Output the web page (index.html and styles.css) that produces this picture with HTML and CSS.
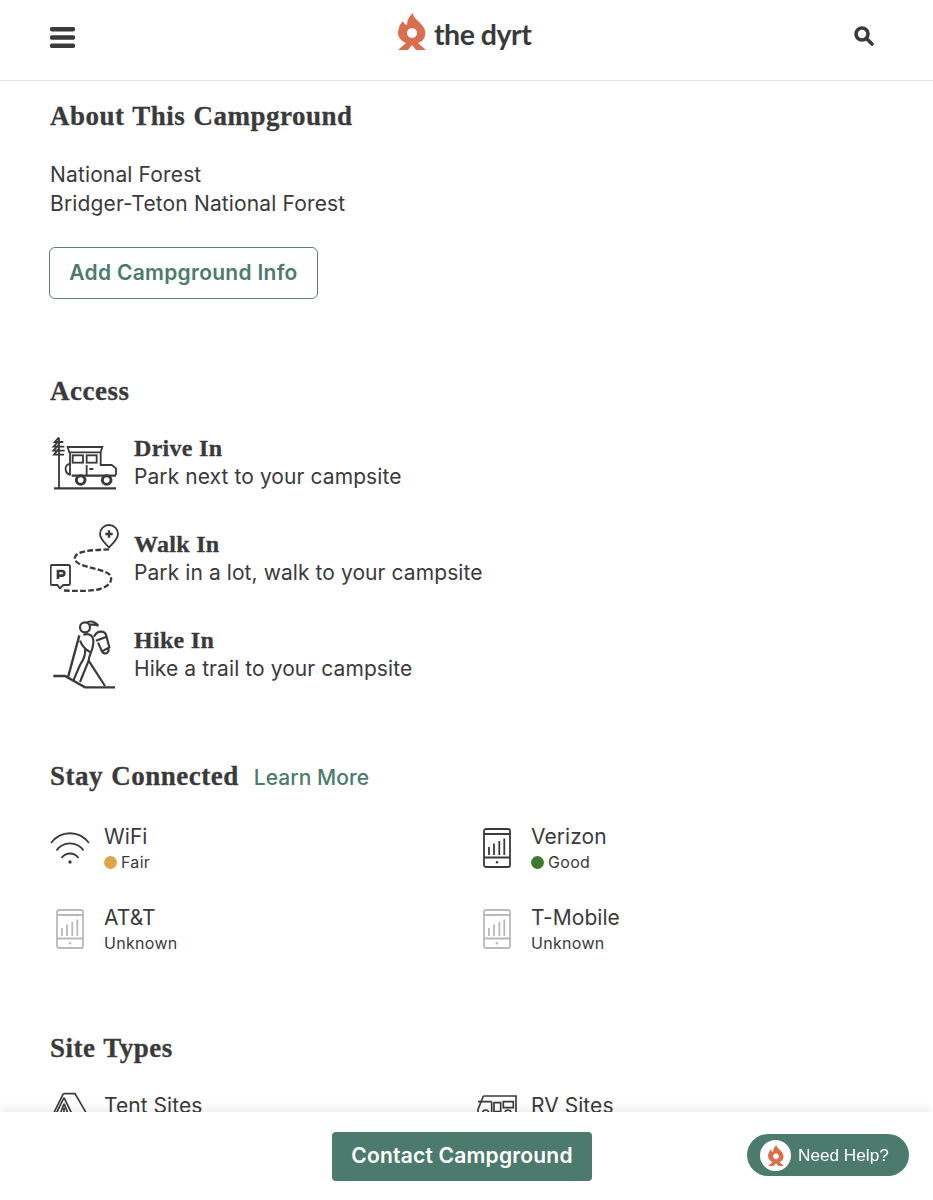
FILE: index.html
```html
<!DOCTYPE html>
<html lang="en">
<head>
<meta charset="utf-8">
<title>About This Campground - The Dyrt</title>
<link rel="stylesheet" href="styles.css">
</head>
<body>
<header class="topbar">
  <svg class="burger" viewBox="0 0 25 21"><path d="M2 2.200h21M2 10.500h21M2 18.800h21"/></svg>
  <div class="logo">
    <svg class="flame" viewBox="0 0 28 37"><path fill-rule="evenodd" d="M15 0C15 5 19 6 23 11C27 15 28 19 27 23C26 27 23 29 20 30L28 37H18L14 32L10 37H0L8 30C3 28 0 24 0 20C0 15 2 11 5 8C6 11 8 12 9 12C9 7 11 3 15 0ZM14 15a5 5 0 1 0 .01 0Z"/></svg>
    <span class="logo-text">the dyrt</span>
  </div>
  <svg class="search" viewBox="0 0 20 20"><circle cx="8" cy="8" r="6"/><path d="M12.500 12.500L18 18"/></svg>
</header>
<main class="page">
  <h2 class="h-about">About This Campground</h2>
  <p class="about-text">National Forest<br>Bridger-Teton National Forest</p>
  <a class="outline-btn">Add Campground Info</a>

  <h2 class="h-section">Access</h2>
  <div class="access-list">
    <div class="access-row">
      <svg class="access-icon" viewBox="60 21 210 210">
        <path class="thick" d="M72 205H258"/>
        <path d="M87 205V55M87 52L74 66H100M87 62L71 80H103M87 74L70 92H104M87 86L72 104H102"/>
        <path d="M113 81H217L212 97H118ZM120 97V165M212 97V135H245L258 145V165M120 132C102 132 102 160 122 165M170 135V165M178 147H190"/>
        <path class="thick" d="M125 167H258"/>
        <rect x="128" y="106" width="31" height="22"/><rect x="170" y="106" width="30" height="22"/>
        <circle class="wheel" cx="152" cy="180" r="13"/><circle class="wheel" cx="230" cy="180" r="13"/>
      </svg>
      <div><h3 class="access-title">Drive In</h3><p class="access-sub">Park next to your campsite</p></div>
    </div>
    <div class="access-row">
      <svg class="access-icon" viewBox="60 24 210 210">
        <path d="M237 97C225 85 210 72 210 57A27 27 0 0 1 264 57C264 72 249 85 237 97Z"/>
        <path class="thick" d="M237 46V68M226 57H248"/>
        <path class="dash" d="M237 103C205 105 165 105 145 115C128 125 132 142 155 150C185 160 225 165 240 180C250 195 240 212 210 222C180 230 130 228 95 226"/>
        <path d="M67 150H115Q120 150 120 155V205Q120 210 115 210H100L90 220L82 210H67Q62 210 62 205V155Q62 150 67 150Z"/>
        <path class="thicker" d="M84 192V168H96A6.500 6.500 0 0 1 96 182H84"/>
      </svg>
      <div><h3 class="access-title">Walk In</h3><p class="access-sub">Park in a lot, walk to your campsite</p></div>
    </div>
    <div class="access-row">
      <svg class="access-icon hiker" viewBox="60 27 210 210">
        <path class="thick" d="M70 198H105L165 232H255M148 76L114 202"/>
        <circle cx="165" cy="52" r="15"/>
        <path d="M170 38C185 30 195 35 205 47C195 42 190 44 180 44"/>
        <path d="M160 74C180 68 192 78 190 100C188 125 176 135 176 152L225 228"/>
        <path d="M150 92C155 105 165 118 180 126M165 118C168 135 160 150 150 165L130 212M176 152L150 216"/>
        <path d="M192 80C200 62 222 60 228 74L238 112L216 124L204 98M198 92L230 80M216 124A10 10 0 1 0 235 116"/>
      </svg>
      <div><h3 class="access-title">Hike In</h3><p class="access-sub">Hike a trail to your campsite</p></div>
    </div>
  </div>

  <div class="stay-head">
    <h2 class="h-inline">Stay Connected</h2>
    <a class="learn">Learn More</a>
  </div>
  <div class="grid conn-grid">
    <div class="conn">
      <svg class="conn-icon" viewBox="0 0 40 40"><path d="M1 15C11 2 29 2 39 15M6.500 22.500C13 13 27 13 33.500 22.500M11.500 30C16 24 24 24 28.500 30"/><circle class="solid" cx="20" cy="34" r="1.700"/></svg>
      <div><div class="conn-name">WiFi</div><div class="conn-sub"><span class="dot dot-fair"></span>Fair</div></div>
    </div>
    <div class="conn">
      <svg class="conn-icon" viewBox="0 0 40 40"><use href="#phone"/></svg>
      <div><div class="conn-name">Verizon</div><div class="conn-sub"><span class="dot dot-good"></span>Good</div></div>
    </div>
    <div class="conn">
      <svg class="conn-icon faded" viewBox="0 0 40 40"><use href="#phone"/></svg>
      <div><div class="conn-name">AT&amp;T</div><div class="conn-sub">Unknown</div></div>
    </div>
    <div class="conn">
      <svg class="conn-icon faded" viewBox="0 0 40 40"><use href="#phone"/></svg>
      <div><div class="conn-name">T-Mobile</div><div class="conn-sub">Unknown</div></div>
    </div>
  </div>

  <h2 class="h-section">Site Types</h2>
  <div class="grid site-grid">
    <div class="site">
      <svg class="site-icon" viewBox="60 15 120 120"><path d="M100 38H135L168 95M100 38L72 95M102 50L80 95M102 50L124 95M102 68L92 95M102 68L113 95M102 80V95"/></svg>
      <span class="conn-name">Tent Sites</span>
    </div>
    <div class="site">
      <svg class="site-icon" viewBox="51 15 120 120"><path d="M70 45H168V100M70 45L54 85V96M54 62H95M95 62V96M102 65H122V92H102ZM130 62H160V80H130ZM68 96a9 9 0 0 1 18 0M135 96a9 9 0 0 1 18 0"/></svg>
      <span class="conn-name">RV Sites</span>
    </div>
  </div>
</main>
<footer class="bottombar">
  <a class="contact-btn">Contact Campground</a>
  <a class="help">
    <span class="help-badge"><svg class="help-flame" viewBox="0 0 28 37"><path fill-rule="evenodd" d="M15 0C15 5 19 6 23 11C27 15 28 19 27 23C26 27 23 29 20 30L28 37H18L14 32L10 37H0L8 30C3 28 0 24 0 20C0 15 2 11 5 8C6 11 8 12 9 12C9 7 11 3 15 0ZM14 15a5 5 0 1 0 .01 0Z"/></svg></span>
    Need Help?
  </a>
</footer>
<svg class="defs" width="0" height="0">
  <symbol id="phone" viewBox="0 0 40 40">
    <rect x="7" y="1" width="26" height="38" rx="2"/>
    <path d="M7 6H33M7 29.500H33M12 27V19M17 27V15.500M22.300 27V13M27.300 27V10.500"/>
    <circle class="solid" cx="20" cy="34.300" r="1.200"/>
  </symbol>
</svg>
</body>
</html>
```
FILE: styles.css
```css
* { box-sizing: border-box; }
html, body { margin: 0; padding: 0; }
body {
  font-family: Inter, "Noto Sans", sans-serif;
  color: #3a3a3c;
  background: #fff;
  height: 1200px;
  overflow: hidden;
}
svg { fill: none; stroke: #3a3a3c; flex: none; }
.solid { fill: currentColor; stroke: none; color: #3a3a3c; }
.defs { position: absolute; }

.topbar {
  height: 81px;
  border-bottom: 1px solid #e4e4e4;
  padding: 0 59px 0 50px;
  display: flex;
  align-items: center;
  justify-content: space-between;
}
.burger { width: 25px; height: 21px; stroke-width: 4.400; stroke-linecap: round; margin-top: -6px; }
.logo { display: flex; align-items: center; gap: 8px; width: 133px; margin-top: -18px; }
.flame { width: 28px; height: 37px; fill: #d8704f; stroke: none; }
.logo-text { font-family: Lato, sans-serif; font-weight: 700; font-size: 28.500px; line-height: 37px; height: 37px; padding-top: 3px; letter-spacing: -.5px; white-space: nowrap; color: #3a3a3c; }
.search { width: 20px; height: 20px; stroke-width: 3.600; stroke-linecap: round; margin-top: -8px; }

.page { padding: 0 50px; }
h2, h3, p { margin: 0; }
.h-about, .h-section, .h-inline {
  font-family: "Liberation Serif", serif;
  font-weight: 700;
  font-size: 27px;
  line-height: 36px;
  letter-spacing: .5px;
  word-spacing: 1px;
  -webkit-text-stroke: .3px #3a3a3c;
}
.h-about { margin-top: 17px; }
.h-section { margin-top: 74px; }
.about-text { margin-top: 26px; font-size: 21px; line-height: 29px; letter-spacing: .14px; }
.outline-btn {
  display: block;
  width: 269px;
  height: 52px;
  margin: 29px 0 0 -1px;
  border: 1.500px solid #5f7f74;
  border-radius: 6px;
  text-align: center;
  font-size: 21px;
  line-height: 49px;
  font-weight: 600;
  color: #4c7a6c;
  letter-spacing: .28px;
}

.access-list { margin-top: 18px; display: flex; flex-direction: column; gap: 26px; }
.access-row { display: flex; align-items: center; gap: 14px; height: 70px; }
.access-icon { width: 70px; height: 70px; stroke-width: 5.500; }
.hiker { stroke-width: 6.500; }
.thick { stroke-width: 7; }
.thicker { stroke-width: 8; }
.wheel { fill: #fff; stroke-width: 9; }
.dash { stroke-width: 7; stroke-dasharray: 17 7; }
.access-title {
  font-family: "Liberation Serif", serif;
  font-weight: 700;
  font-size: 24px;
  line-height: 29px;
  letter-spacing: .3px;
  -webkit-text-stroke: .3px #3a3a3c;
}
.access-sub { font-size: 21px; line-height: 28px; letter-spacing: .08px; }

.stay-head { display: flex; align-items: center; gap: 15px; margin-top: 69px; }
.learn { font-size: 21px; font-weight: 500; color: #4c7a6c; letter-spacing: .05px; margin-top: 3px; }

.grid { display: grid; grid-template-columns: 427px 1fr; }
.conn-grid { margin-top: 29px; row-gap: 29px; }
.conn { display: flex; gap: 14px; }
.conn-icon { width: 40px; height: 40px; margin-top: 5px; stroke-width: 1.800; }
.faded { opacity: .35; }
.conn-name { font-size: 21px; line-height: 27px; letter-spacing: .05px; }
.conn-sub { display: flex; align-items: center; gap: 4px; font-size: 16px; line-height: 25px; letter-spacing: .3px; }
.dot { width: 13px; height: 13px; border-radius: 50%; }
.dot-fair { background: #dfa54a; }
.dot-good { background: #3d7a2e; }

.site-grid { margin-top: 19.500px; }
.site { display: flex; align-items: center; gap: 14px; height: 40px; }
.site-icon { width: 40px; height: 40px; stroke-width: 5; }

.bottombar {
  position: fixed;
  left: 0;
  right: 0;
  bottom: 0;
  height: 88px;
  background: #fff;
  box-shadow: 0 -2px 10px rgba(0, 0, 0, .09);
  padding: 20px 9px 0 0;
  display: flex;
  justify-content: center;
  align-items: flex-start;
}
.contact-btn {
  width: 260px;
  height: 49px;
  background: #4c7a6c;
  border-radius: 4px;
  color: #fff;
  text-align: center;
  font-size: 21px;
  line-height: 48px;
  font-weight: 600;
  letter-spacing: .2px;
}
.help {
  position: absolute;
  right: 24px;
  top: 22px;
  width: 162px;
  height: 42px;
  border-radius: 21px;
  background: #4c7a6c;
  color: #fff;
  display: flex;
  align-items: center;
  gap: 7px;
  padding-left: 13px;
  font-family: "Liberation Sans", sans-serif;
  font-size: 17.200px;
  white-space: nowrap;
}
.help-badge { width: 31px; height: 31px; border-radius: 50%; background: #fff; display: flex; align-items: center; justify-content: center; }
.help-flame { width: 16px; height: 21px; fill: #d8704f; stroke: none; }
```
